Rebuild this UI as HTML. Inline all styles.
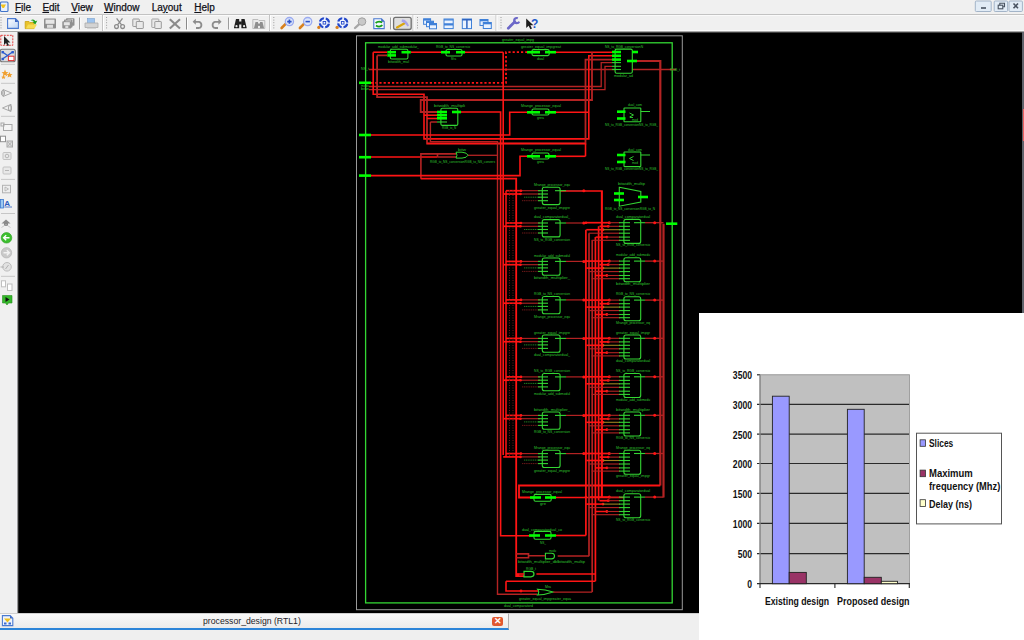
<!DOCTYPE html>
<html><head><meta charset="utf-8">
<style>
*{margin:0;padding:0;box-sizing:border-box}
html,body{width:1024px;height:640px;overflow:hidden;background:#f0f0f0;font-family:"Liberation Sans",sans-serif}
.abs{position:absolute}
#menubar{left:0;top:0;width:1024px;height:15px;background:#f0f0f0;border-bottom:1px solid #c2c2c2}
.menu{position:absolute;top:1.5px;font-size:10px;color:#101018;line-height:11px;-webkit-text-stroke:0.25px #101018}
.menu u{text-decoration:underline}
#toolbar{left:0;top:15px;width:1024px;height:17px;background:#f0f0f0;border-top:1px solid #fafafa;border-bottom:1px solid #a8a8a8;box-shadow:inset 0 -1px 0 #fbfbfb}
#canvas{left:18px;top:32px;width:1004px;height:581px;background:#000;border-top:1px solid #404040;border-left:1px solid #262626}
#lefttb{left:0;top:32px;width:18px;height:581px;background:#f0f0f0;border-right:1px solid #9a9a9a;box-shadow:inset -1px 0 0 #f2f2f6}
#rightedge{left:1022px;top:32px;width:2px;height:581px;background:#5f636b}
#bottom{left:0;top:613px;width:1024px;height:27px;background:#efefef;border-top:1px solid #cfcfcf}
#tab{left:0;top:613px;width:509px;height:17px;background:linear-gradient(#f9f9f9,#ebebeb);border-top:1px solid #d0d0d0;border-right:1px solid #b0b0b0;border-bottom:2px solid #2b84d8}
#chart{left:699px;top:313px;width:325px;height:327px;background:#fff}
.ylab{position:absolute;font-size:10px;font-weight:bold;color:#111;text-align:right;width:30px;transform:scaleX(.86);transform-origin:100% 0;line-height:10px}
.ctxt{position:absolute;font-size:10.5px;font-weight:bold;color:#111;white-space:nowrap;transform-origin:0 0;line-height:11px}
</style></head><body>
<div id="menubar" class="abs"></div>
<div id="toolbar" class="abs"></div>
<div id="canvas" class="abs"></div>
<div id="lefttb" class="abs"></div>
<div id="rightedge" class="abs"></div>
<div class="abs" style="left:1023px;top:109px;width:1px;height:32px;background:#f06060"></div>
<div id="bottom" class="abs"></div>
<div id="tab" class="abs"></div>
<div class="abs" style="left:202.8px;top:616.3px;font-size:9px;color:#1e1e2a;white-space:nowrap;line-height:11px;transform:scaleX(.965);transform-origin:0 0">processor_design (RTL1)</div>
<svg class="abs" style="left:0;top:0" width="40" height="640"><path d="M2.4,615.6 H10.2 L12.8,618.2 V625.6 H2.4 Z" fill="#eef4fc" stroke="#4a7ad0" stroke-width="1.1"/><path d="M10,615.6 L12.8,618.4 H10 Z" fill="#3b66c4"/><path d="M4,618.5 H11 L7.5,622.5 Z" fill="#f0c020"/><rect x="4" y="622.5" width="2.5" height="2" fill="#3a6ad0"/><rect x="8.5" y="622.5" width="2.5" height="2" fill="#3a6ad0"/></svg>
<div class="abs" style="left:492px;top:617px;width:11px;height:9px;background:#e2582f;border-radius:2px;color:#fff;font-size:9px;line-height:9px;text-align:center;font-weight:bold">&#x2715;</div>
<svg class="abs" style="left:0;top:0" width="1024" height="640" viewBox="0 0 1024 640">
<rect x="356.5" y="35.8" width="325.8" height="573.9" fill="none" stroke="#9a9a9a" stroke-width="1"/>
<rect x="365.6" y="42.8" width="306.6" height="560.1" fill="none" stroke="#33d633" stroke-width="1.3"/>
<text x="502" y="40.8" font-family="Liberation Sans" font-size="4" textLength="32" lengthAdjust="spacingAndGlyphs" fill="#2fc42f">greater_equal_impg</text>
<text x="504" y="606.5" font-family="Liberation Sans" font-size="4" textLength="29" lengthAdjust="spacingAndGlyphs" fill="#2fc42f">dual_comparatord</text>
<line x1="369" y1="69.5" x2="676" y2="69.5" stroke="#b42323" stroke-width="1.3" />
<path d="M369,86.5 H601.2 V62.6 H612" fill="none" stroke="#b42323" stroke-width="1.3" />
<path d="M369,89.7 H605 V66.3 H612" fill="none" stroke="#b42323" stroke-width="1.3" />
<text x="361" y="69.8" font-family="Liberation Sans" font-size="4" textLength="8" lengthAdjust="spacingAndGlyphs" fill="#2fc42f">NS_t</text>
<text x="361" y="86.8" font-family="Liberation Sans" font-size="4" textLength="8" lengthAdjust="spacingAndGlyphs" fill="#2fc42f">modu</text>
<text x="361" y="90.0" font-family="Liberation Sans" font-size="4" textLength="8" lengthAdjust="spacingAndGlyphs" fill="#2fc42f">bitw</text>
<text x="670" y="70.5" font-family="Liberation Sans" font-size="4" textLength="10" lengthAdjust="spacingAndGlyphs" fill="#2fc42f">RGB_t</text>
<path d="M371,82.8 H506 V52.2 H527" fill="none" stroke="#ff1414" stroke-width="1.8" stroke-dasharray="2.2 2"/>
<line x1="359" y1="82.8" x2="371" y2="82.8" stroke="#00ff00" stroke-width="2.6" />
<line x1="373.2" y1="52.2" x2="387" y2="52.2" stroke="#ff1414" stroke-width="1.6" />
<line x1="410.8" y1="52.2" x2="441" y2="52.2" stroke="#ff1414" stroke-width="1.6" />
<line x1="465" y1="52.2" x2="503.2" y2="52.2" stroke="#ff1414" stroke-width="1.6" />
<line x1="556" y1="52.2" x2="612" y2="52.2" stroke="#ff1414" stroke-width="1.6" />
<path d="M373.2,52.2 V94.2 H424 V138.9 H588.8 V55.8 H612" fill="none" stroke="#ff1414" stroke-width="1.6" />
<path d="M377.1,55.4 H387 M377.1,55.4 V97.1 H427 V143.5 H585.5 V59.6 H612" fill="none" stroke="#b42323" stroke-width="1.8" />
<path d="M427,143.5 H585.5" fill="none" stroke="#ff1414" stroke-width="1.6" />
<path d="M592,52.2 V100 H420.7 V112 H437" fill="none" stroke="#b42323" stroke-width="1.8" />
<line x1="424" y1="115.2" x2="437" y2="115.2" stroke="#ff1414" stroke-width="1.6" />
<line x1="427" y1="118.5" x2="437" y2="118.5" stroke="#ff1414" stroke-width="1.6" />
<path d="M461,112 H500.6 V535.8 H534" fill="none" stroke="#ff1414" stroke-width="1.6" />
<path d="M430.4,122 H437 M430.4,122 V141.6 H497.5 V594.3 H537" fill="none" stroke="#b42323" stroke-width="1.4" />
<path d="M370,135 H509.7 V112.3 H527" fill="none" stroke="#ff1414" stroke-width="1.6" />
<line x1="359" y1="135" x2="371" y2="135" stroke="#00ff00" stroke-width="2.6" />
<line x1="556" y1="112.3" x2="588.8" y2="112.3" stroke="#ff1414" stroke-width="1.6" />
<line x1="503.2" y1="52.2" x2="503.2" y2="455" stroke="#ff1414" stroke-width="1.6" />
<line x1="359" y1="157.2" x2="371" y2="157.2" stroke="#00ff00" stroke-width="2.6" />
<line x1="359" y1="175.6" x2="371" y2="175.6" stroke="#00ff00" stroke-width="2.6" />
<line x1="371" y1="157" x2="437.5" y2="157" stroke="#ff1414" stroke-width="1.6" />
<line x1="437.5" y1="157" x2="456" y2="157" stroke="#b42323" stroke-width="1.5" />
<path d="M456,153.9 H420.9 V178.7 M437.5,153.9 V157" fill="none" stroke="#b42323" stroke-width="1.6" />
<path d="M420.7,178.7 H516.2 V576.2 H524" fill="none" stroke="#ff1414" stroke-width="1.8" />
<path d="M371,175.6 H520 V156.3 H527" fill="none" stroke="#ff1414" stroke-width="1.6" />
<line x1="556" y1="156.3" x2="585.5" y2="156.3" stroke="#ff1414" stroke-width="1.6" />
<path d="M585.5,143.5 V156.3" fill="none" stroke="#ff1414" stroke-width="1.6" />
<line x1="468" y1="155.3" x2="497.5" y2="155.3" stroke="#b42323" stroke-width="1.3" />
<path d="M560,191 H602 V497.5" fill="none" stroke="#ff1414" stroke-width="1.6" />
<path d="M637,61 H660.3 V485.5" fill="none" stroke="#b42323" stroke-width="2.2" />
<path d="M660.3,485.5 H519 V497.5 H534.5" fill="none" stroke="#ff1414" stroke-width="1.8" />
<line x1="551.2" y1="497.5" x2="624" y2="497.5" stroke="#ff1414" stroke-width="1.6" />
<line x1="663.5" y1="223.7" x2="663.5" y2="497.5" stroke="#b42323" stroke-width="2.2" />
<line x1="666" y1="223.7" x2="677.3" y2="223.7" stroke="#00ff00" stroke-width="2.6" />
<rect x="542.3" y="187.3" width="17.800000000000068" height="17.30000000000001" rx="2" fill="#000" stroke="#33d633" stroke-width="1.1"/>
<text x="534" y="185.8" font-family="Liberation Sans" font-size="4" textLength="36" lengthAdjust="spacingAndGlyphs" fill="#2fc42f">Mrange_processor_equ</text>
<text x="534" y="208.60000000000002" font-family="Liberation Sans" font-size="4" textLength="36" lengthAdjust="spacingAndGlyphs" fill="#2fc42f">greater_equal_impgre</text>
<line x1="506" y1="190.70000000000002" x2="521" y2="190.70000000000002" stroke="#ff1414" stroke-width="1.7" />
<line x1="521" y1="190.70000000000002" x2="540" y2="190.70000000000002" stroke="#b42323" stroke-width="1.1" />
<circle cx="521" cy="190.70000000000002" r="1.3" fill="#ff1414"/>
<line x1="503.2" y1="194.0" x2="520.5" y2="194.0" stroke="#ff1414" stroke-width="1.7" />
<line x1="520.5" y1="194.0" x2="540" y2="194.0" stroke="#b42323" stroke-width="1.1" />
<circle cx="520.5" cy="194.0" r="1.3" fill="#ff1414"/>
<line x1="524" y1="197.20000000000002" x2="540" y2="197.20000000000002" stroke="#2a9a2a" stroke-width="0.8" stroke-dasharray="1.2 0.6"/>
<line x1="522" y1="200.70000000000002" x2="540" y2="200.70000000000002" stroke="#8a2020" stroke-width="0.8" stroke-dasharray="1.2 0.6"/>
<line x1="538" y1="190.70000000000002" x2="548" y2="190.70000000000002" stroke="#33d633" stroke-width="1.1" />
<line x1="538" y1="194.0" x2="548" y2="194.0" stroke="#33d633" stroke-width="1.1" />
<line x1="538" y1="197.20000000000002" x2="548" y2="197.20000000000002" stroke="#33d633" stroke-width="1.1" />
<line x1="538" y1="200.70000000000002" x2="548" y2="200.70000000000002" stroke="#33d633" stroke-width="1.1" />
<line x1="555" y1="190.70000000000002" x2="566" y2="190.70000000000002" stroke="#33d633" stroke-width="1.1" />
<line x1="566" y1="190.70000000000002" x2="585.9" y2="190.70000000000002" stroke="#b42323" stroke-width="1.2" />
<circle cx="583.8" cy="190.70000000000002" r="1.5" fill="#ff1414"/>
<rect x="542.3" y="219.6" width="17.800000000000068" height="17.30000000000001" rx="2" fill="#000" stroke="#33d633" stroke-width="1.1"/>
<text x="534" y="218.1" font-family="Liberation Sans" font-size="4" textLength="36" lengthAdjust="spacingAndGlyphs" fill="#2fc42f">dual_comparatordual_</text>
<text x="534" y="240.9" font-family="Liberation Sans" font-size="4" textLength="36" lengthAdjust="spacingAndGlyphs" fill="#2fc42f">NS_to_RGB_conversion</text>
<line x1="506" y1="223.0" x2="521" y2="223.0" stroke="#ff1414" stroke-width="1.7" />
<line x1="521" y1="223.0" x2="540" y2="223.0" stroke="#b42323" stroke-width="1.1" />
<circle cx="521" cy="223.0" r="1.3" fill="#ff1414"/>
<line x1="503.2" y1="226.29999999999998" x2="520.5" y2="226.29999999999998" stroke="#ff1414" stroke-width="1.7" />
<line x1="520.5" y1="226.29999999999998" x2="540" y2="226.29999999999998" stroke="#b42323" stroke-width="1.1" />
<circle cx="520.5" cy="226.29999999999998" r="1.3" fill="#ff1414"/>
<line x1="524" y1="229.5" x2="540" y2="229.5" stroke="#2a9a2a" stroke-width="0.8" stroke-dasharray="1.2 0.6"/>
<line x1="522" y1="233.0" x2="540" y2="233.0" stroke="#8a2020" stroke-width="0.8" stroke-dasharray="1.2 0.6"/>
<line x1="538" y1="223.0" x2="548" y2="223.0" stroke="#33d633" stroke-width="1.1" />
<line x1="538" y1="226.29999999999998" x2="548" y2="226.29999999999998" stroke="#33d633" stroke-width="1.1" />
<line x1="538" y1="229.5" x2="548" y2="229.5" stroke="#33d633" stroke-width="1.1" />
<line x1="538" y1="233.0" x2="548" y2="233.0" stroke="#33d633" stroke-width="1.1" />
<line x1="555" y1="223.0" x2="566" y2="223.0" stroke="#33d633" stroke-width="1.1" />
<line x1="566" y1="223.0" x2="585.9" y2="223.0" stroke="#b42323" stroke-width="1.2" />
<circle cx="583.8" cy="223.0" r="1.5" fill="#ff1414"/>
<rect x="542.3" y="258.0" width="17.800000000000068" height="17.30000000000001" rx="2" fill="#000" stroke="#33d633" stroke-width="1.1"/>
<text x="534" y="256.5" font-family="Liberation Sans" font-size="4" textLength="36" lengthAdjust="spacingAndGlyphs" fill="#2fc42f">modular_add_submodul</text>
<text x="534" y="279.3" font-family="Liberation Sans" font-size="4" textLength="36" lengthAdjust="spacingAndGlyphs" fill="#2fc42f">bitwidth_multiplier_</text>
<line x1="506" y1="261.4" x2="521" y2="261.4" stroke="#ff1414" stroke-width="1.7" />
<line x1="521" y1="261.4" x2="540" y2="261.4" stroke="#b42323" stroke-width="1.1" />
<circle cx="521" cy="261.4" r="1.3" fill="#ff1414"/>
<line x1="503.2" y1="264.7" x2="520.5" y2="264.7" stroke="#ff1414" stroke-width="1.7" />
<line x1="520.5" y1="264.7" x2="540" y2="264.7" stroke="#b42323" stroke-width="1.1" />
<circle cx="520.5" cy="264.7" r="1.3" fill="#ff1414"/>
<line x1="524" y1="267.9" x2="540" y2="267.9" stroke="#2a9a2a" stroke-width="0.8" stroke-dasharray="1.2 0.6"/>
<line x1="522" y1="271.4" x2="540" y2="271.4" stroke="#8a2020" stroke-width="0.8" stroke-dasharray="1.2 0.6"/>
<line x1="538" y1="261.4" x2="548" y2="261.4" stroke="#33d633" stroke-width="1.1" />
<line x1="538" y1="264.7" x2="548" y2="264.7" stroke="#33d633" stroke-width="1.1" />
<line x1="538" y1="267.9" x2="548" y2="267.9" stroke="#33d633" stroke-width="1.1" />
<line x1="538" y1="271.4" x2="548" y2="271.4" stroke="#33d633" stroke-width="1.1" />
<line x1="555" y1="261.4" x2="566" y2="261.4" stroke="#33d633" stroke-width="1.1" />
<line x1="566" y1="261.4" x2="585.9" y2="261.4" stroke="#b42323" stroke-width="1.2" />
<circle cx="583.8" cy="261.4" r="1.5" fill="#ff1414"/>
<rect x="542.3" y="296.5" width="17.800000000000068" height="17.30000000000001" rx="2" fill="#000" stroke="#33d633" stroke-width="1.1"/>
<text x="534" y="295.0" font-family="Liberation Sans" font-size="4" textLength="36" lengthAdjust="spacingAndGlyphs" fill="#2fc42f">RGB_to_NS_conversion</text>
<text x="534" y="317.8" font-family="Liberation Sans" font-size="4" textLength="36" lengthAdjust="spacingAndGlyphs" fill="#2fc42f">Mrange_processor_equ</text>
<line x1="506" y1="299.9" x2="521" y2="299.9" stroke="#ff1414" stroke-width="1.7" />
<line x1="521" y1="299.9" x2="540" y2="299.9" stroke="#b42323" stroke-width="1.1" />
<circle cx="521" cy="299.9" r="1.3" fill="#ff1414"/>
<line x1="503.2" y1="303.2" x2="520.5" y2="303.2" stroke="#ff1414" stroke-width="1.7" />
<line x1="520.5" y1="303.2" x2="540" y2="303.2" stroke="#b42323" stroke-width="1.1" />
<circle cx="520.5" cy="303.2" r="1.3" fill="#ff1414"/>
<line x1="524" y1="306.4" x2="540" y2="306.4" stroke="#2a9a2a" stroke-width="0.8" stroke-dasharray="1.2 0.6"/>
<line x1="522" y1="309.9" x2="540" y2="309.9" stroke="#8a2020" stroke-width="0.8" stroke-dasharray="1.2 0.6"/>
<line x1="538" y1="299.9" x2="548" y2="299.9" stroke="#33d633" stroke-width="1.1" />
<line x1="538" y1="303.2" x2="548" y2="303.2" stroke="#33d633" stroke-width="1.1" />
<line x1="538" y1="306.4" x2="548" y2="306.4" stroke="#33d633" stroke-width="1.1" />
<line x1="538" y1="309.9" x2="548" y2="309.9" stroke="#33d633" stroke-width="1.1" />
<line x1="555" y1="299.9" x2="566" y2="299.9" stroke="#33d633" stroke-width="1.1" />
<line x1="566" y1="299.9" x2="585.9" y2="299.9" stroke="#b42323" stroke-width="1.2" />
<circle cx="583.8" cy="299.9" r="1.5" fill="#ff1414"/>
<rect x="542.3" y="335.0" width="17.800000000000068" height="17.30000000000001" rx="2" fill="#000" stroke="#33d633" stroke-width="1.1"/>
<text x="534" y="333.5" font-family="Liberation Sans" font-size="4" textLength="36" lengthAdjust="spacingAndGlyphs" fill="#2fc42f">greater_equal_impgre</text>
<text x="534" y="356.3" font-family="Liberation Sans" font-size="4" textLength="36" lengthAdjust="spacingAndGlyphs" fill="#2fc42f">dual_comparatordual_</text>
<line x1="506" y1="338.4" x2="521" y2="338.4" stroke="#ff1414" stroke-width="1.7" />
<line x1="521" y1="338.4" x2="540" y2="338.4" stroke="#b42323" stroke-width="1.1" />
<circle cx="521" cy="338.4" r="1.3" fill="#ff1414"/>
<line x1="503.2" y1="341.7" x2="520.5" y2="341.7" stroke="#ff1414" stroke-width="1.7" />
<line x1="520.5" y1="341.7" x2="540" y2="341.7" stroke="#b42323" stroke-width="1.1" />
<circle cx="520.5" cy="341.7" r="1.3" fill="#ff1414"/>
<line x1="524" y1="344.9" x2="540" y2="344.9" stroke="#2a9a2a" stroke-width="0.8" stroke-dasharray="1.2 0.6"/>
<line x1="522" y1="348.4" x2="540" y2="348.4" stroke="#8a2020" stroke-width="0.8" stroke-dasharray="1.2 0.6"/>
<line x1="538" y1="338.4" x2="548" y2="338.4" stroke="#33d633" stroke-width="1.1" />
<line x1="538" y1="341.7" x2="548" y2="341.7" stroke="#33d633" stroke-width="1.1" />
<line x1="538" y1="344.9" x2="548" y2="344.9" stroke="#33d633" stroke-width="1.1" />
<line x1="538" y1="348.4" x2="548" y2="348.4" stroke="#33d633" stroke-width="1.1" />
<line x1="555" y1="338.4" x2="566" y2="338.4" stroke="#33d633" stroke-width="1.1" />
<line x1="566" y1="338.4" x2="585.9" y2="338.4" stroke="#b42323" stroke-width="1.2" />
<circle cx="583.8" cy="338.4" r="1.5" fill="#ff1414"/>
<rect x="542.3" y="373.5" width="17.800000000000068" height="17.30000000000001" rx="2" fill="#000" stroke="#33d633" stroke-width="1.1"/>
<text x="534" y="372.0" font-family="Liberation Sans" font-size="4" textLength="36" lengthAdjust="spacingAndGlyphs" fill="#2fc42f">NS_to_RGB_conversion</text>
<text x="534" y="394.8" font-family="Liberation Sans" font-size="4" textLength="36" lengthAdjust="spacingAndGlyphs" fill="#2fc42f">modular_add_submodul</text>
<line x1="506" y1="376.9" x2="521" y2="376.9" stroke="#ff1414" stroke-width="1.7" />
<line x1="521" y1="376.9" x2="540" y2="376.9" stroke="#b42323" stroke-width="1.1" />
<circle cx="521" cy="376.9" r="1.3" fill="#ff1414"/>
<line x1="503.2" y1="380.2" x2="520.5" y2="380.2" stroke="#ff1414" stroke-width="1.7" />
<line x1="520.5" y1="380.2" x2="540" y2="380.2" stroke="#b42323" stroke-width="1.1" />
<circle cx="520.5" cy="380.2" r="1.3" fill="#ff1414"/>
<line x1="524" y1="383.4" x2="540" y2="383.4" stroke="#2a9a2a" stroke-width="0.8" stroke-dasharray="1.2 0.6"/>
<line x1="522" y1="386.9" x2="540" y2="386.9" stroke="#8a2020" stroke-width="0.8" stroke-dasharray="1.2 0.6"/>
<line x1="538" y1="376.9" x2="548" y2="376.9" stroke="#33d633" stroke-width="1.1" />
<line x1="538" y1="380.2" x2="548" y2="380.2" stroke="#33d633" stroke-width="1.1" />
<line x1="538" y1="383.4" x2="548" y2="383.4" stroke="#33d633" stroke-width="1.1" />
<line x1="538" y1="386.9" x2="548" y2="386.9" stroke="#33d633" stroke-width="1.1" />
<line x1="555" y1="376.9" x2="566" y2="376.9" stroke="#33d633" stroke-width="1.1" />
<line x1="566" y1="376.9" x2="585.9" y2="376.9" stroke="#b42323" stroke-width="1.2" />
<circle cx="583.8" cy="376.9" r="1.5" fill="#ff1414"/>
<rect x="542.3" y="412.0" width="17.800000000000068" height="17.30000000000001" rx="2" fill="#000" stroke="#33d633" stroke-width="1.1"/>
<text x="534" y="410.5" font-family="Liberation Sans" font-size="4" textLength="36" lengthAdjust="spacingAndGlyphs" fill="#2fc42f">bitwidth_multiplier_</text>
<text x="534" y="433.3" font-family="Liberation Sans" font-size="4" textLength="36" lengthAdjust="spacingAndGlyphs" fill="#2fc42f">RGB_to_NS_conversion</text>
<line x1="506" y1="415.4" x2="521" y2="415.4" stroke="#ff1414" stroke-width="1.7" />
<line x1="521" y1="415.4" x2="540" y2="415.4" stroke="#b42323" stroke-width="1.1" />
<circle cx="521" cy="415.4" r="1.3" fill="#ff1414"/>
<line x1="503.2" y1="418.7" x2="520.5" y2="418.7" stroke="#ff1414" stroke-width="1.7" />
<line x1="520.5" y1="418.7" x2="540" y2="418.7" stroke="#b42323" stroke-width="1.1" />
<circle cx="520.5" cy="418.7" r="1.3" fill="#ff1414"/>
<line x1="524" y1="421.9" x2="540" y2="421.9" stroke="#2a9a2a" stroke-width="0.8" stroke-dasharray="1.2 0.6"/>
<line x1="522" y1="425.4" x2="540" y2="425.4" stroke="#8a2020" stroke-width="0.8" stroke-dasharray="1.2 0.6"/>
<line x1="538" y1="415.4" x2="548" y2="415.4" stroke="#33d633" stroke-width="1.1" />
<line x1="538" y1="418.7" x2="548" y2="418.7" stroke="#33d633" stroke-width="1.1" />
<line x1="538" y1="421.9" x2="548" y2="421.9" stroke="#33d633" stroke-width="1.1" />
<line x1="538" y1="425.4" x2="548" y2="425.4" stroke="#33d633" stroke-width="1.1" />
<line x1="555" y1="415.4" x2="566" y2="415.4" stroke="#33d633" stroke-width="1.1" />
<line x1="566" y1="415.4" x2="585.9" y2="415.4" stroke="#b42323" stroke-width="1.2" />
<circle cx="583.8" cy="415.4" r="1.5" fill="#ff1414"/>
<rect x="542.3" y="450.2" width="17.800000000000068" height="17.30000000000001" rx="2" fill="#000" stroke="#33d633" stroke-width="1.1"/>
<text x="534" y="448.7" font-family="Liberation Sans" font-size="4" textLength="36" lengthAdjust="spacingAndGlyphs" fill="#2fc42f">Mrange_processor_equ</text>
<text x="534" y="471.5" font-family="Liberation Sans" font-size="4" textLength="36" lengthAdjust="spacingAndGlyphs" fill="#2fc42f">greater_equal_impgre</text>
<line x1="506" y1="453.59999999999997" x2="521" y2="453.59999999999997" stroke="#ff1414" stroke-width="1.7" />
<line x1="521" y1="453.59999999999997" x2="540" y2="453.59999999999997" stroke="#b42323" stroke-width="1.1" />
<circle cx="521" cy="453.59999999999997" r="1.3" fill="#ff1414"/>
<line x1="503.2" y1="456.9" x2="520.5" y2="456.9" stroke="#ff1414" stroke-width="1.7" />
<line x1="520.5" y1="456.9" x2="540" y2="456.9" stroke="#b42323" stroke-width="1.1" />
<circle cx="520.5" cy="456.9" r="1.3" fill="#ff1414"/>
<line x1="524" y1="460.09999999999997" x2="540" y2="460.09999999999997" stroke="#2a9a2a" stroke-width="0.8" stroke-dasharray="1.2 0.6"/>
<line x1="522" y1="463.59999999999997" x2="540" y2="463.59999999999997" stroke="#8a2020" stroke-width="0.8" stroke-dasharray="1.2 0.6"/>
<line x1="538" y1="453.59999999999997" x2="548" y2="453.59999999999997" stroke="#33d633" stroke-width="1.1" />
<line x1="538" y1="456.9" x2="548" y2="456.9" stroke="#33d633" stroke-width="1.1" />
<line x1="538" y1="460.09999999999997" x2="548" y2="460.09999999999997" stroke="#33d633" stroke-width="1.1" />
<line x1="538" y1="463.59999999999997" x2="548" y2="463.59999999999997" stroke="#33d633" stroke-width="1.1" />
<line x1="555" y1="453.59999999999997" x2="566" y2="453.59999999999997" stroke="#33d633" stroke-width="1.1" />
<line x1="566" y1="453.59999999999997" x2="585.9" y2="453.59999999999997" stroke="#b42323" stroke-width="1.2" />
<circle cx="583.8" cy="453.59999999999997" r="1.5" fill="#ff1414"/>
<line x1="509.5" y1="190" x2="509.5" y2="457" stroke="#7a1a1a" stroke-width="0.9" stroke-dasharray="1 1.5"/>
<line x1="513" y1="190" x2="513" y2="457" stroke="#7a1a1a" stroke-width="0.9" stroke-dasharray="1 1.5"/>
<line x1="506" y1="190.8" x2="506" y2="457" stroke="#ff1414" stroke-width="1.5" />
<line x1="585.9" y1="229.70000000000002" x2="585.9" y2="535.5" stroke="#ff1414" stroke-width="1.7" />
<line x1="589" y1="233.20000000000002" x2="589" y2="556.3" stroke="#b42323" stroke-width="1.7" />
<line x1="592.2" y1="240.3" x2="592.2" y2="592" stroke="#b42323" stroke-width="1.7" />
<line x1="595.4" y1="237.1" x2="595.4" y2="581.3" stroke="#ff1414" stroke-width="1.7" />
<line x1="598.6" y1="226.3" x2="598.6" y2="500.5" stroke="#ff1414" stroke-width="1.7" />
<line x1="601.7" y1="191" x2="601.7" y2="497.5" stroke="#ff1414" stroke-width="1.7" />
<rect x="623.9" y="219.4" width="16.800000000000068" height="24.0" rx="2" fill="#000" stroke="#33d633" stroke-width="1.1"/>
<text x="616" y="217.9" font-family="Liberation Sans" font-size="4" textLength="34" lengthAdjust="spacingAndGlyphs" fill="#2fc42f">dual_comparatordual</text>
<text x="616" y="246.4" font-family="Liberation Sans" font-size="4" textLength="34" lengthAdjust="spacingAndGlyphs" fill="#2fc42f">NS_to_RGB_conversio</text>
<line x1="585.9" y1="222.70000000000002" x2="609.3" y2="222.70000000000002" stroke="#ff1414" stroke-width="1.7" />
<circle cx="609.3" cy="222.70000000000002" r="1.5" fill="#ff1414"/>
<circle cx="585.9" cy="222.70000000000002" r="1.3" fill="#ff1414"/>
<line x1="609.3" y1="222.70000000000002" x2="620" y2="222.70000000000002" stroke="#b42323" stroke-width="1.1" />
<line x1="599.5" y1="226.3" x2="608.3" y2="226.3" stroke="#ff1414" stroke-width="1.7" />
<circle cx="608.3" cy="226.3" r="1.4" fill="#ff1414"/>
<line x1="608.3" y1="226.3" x2="620" y2="226.3" stroke="#b42323" stroke-width="1.1" />
<line x1="586.3" y1="229.70000000000002" x2="603" y2="229.70000000000002" stroke="#ff1414" stroke-width="1.6" />
<circle cx="603" cy="229.70000000000002" r="1.4" fill="#ff1414"/>
<line x1="603" y1="229.70000000000002" x2="620" y2="229.70000000000002" stroke="#a08020" stroke-width="1.1" />
<line x1="588.8" y1="233.20000000000002" x2="620" y2="233.20000000000002" stroke="#b42323" stroke-width="1.1" />
<line x1="595.6" y1="237.1" x2="606.9" y2="237.1" stroke="#ff1414" stroke-width="1.5" />
<circle cx="606.9" cy="237.1" r="1.4" fill="#ff1414"/>
<line x1="606.9" y1="237.1" x2="620" y2="237.1" stroke="#b42323" stroke-width="1.1" />
<line x1="591.7" y1="240.3" x2="620" y2="240.3" stroke="#b42323" stroke-width="1.1" />
<line x1="619" y1="222.70000000000002" x2="630" y2="222.70000000000002" stroke="#33d633" stroke-width="1.1" />
<line x1="619" y1="226.3" x2="630" y2="226.3" stroke="#33d633" stroke-width="1.1" />
<line x1="619" y1="229.70000000000002" x2="630" y2="229.70000000000002" stroke="#33d633" stroke-width="1.1" />
<line x1="619" y1="233.20000000000002" x2="630" y2="233.20000000000002" stroke="#33d633" stroke-width="1.1" />
<line x1="619" y1="237.1" x2="630" y2="237.1" stroke="#33d633" stroke-width="1.1" />
<line x1="619" y1="240.3" x2="630" y2="240.3" stroke="#33d633" stroke-width="1.1" />
<line x1="634" y1="222.70000000000002" x2="645" y2="222.70000000000002" stroke="#33d633" stroke-width="1.1" />
<line x1="645" y1="222.70000000000002" x2="663.5" y2="222.70000000000002" stroke="#b42323" stroke-width="1.3" />
<circle cx="654.7" cy="222.70000000000002" r="1.5" fill="#ff1414"/>
<rect x="623.9" y="257.8" width="16.800000000000068" height="24.0" rx="2" fill="#000" stroke="#33d633" stroke-width="1.1"/>
<text x="616" y="256.3" font-family="Liberation Sans" font-size="4" textLength="34" lengthAdjust="spacingAndGlyphs" fill="#2fc42f">modular_add_submodu</text>
<text x="616" y="284.8" font-family="Liberation Sans" font-size="4" textLength="34" lengthAdjust="spacingAndGlyphs" fill="#2fc42f">bitwidth_multiplier</text>
<line x1="585.9" y1="261.1" x2="609.3" y2="261.1" stroke="#ff1414" stroke-width="1.7" />
<circle cx="609.3" cy="261.1" r="1.5" fill="#ff1414"/>
<circle cx="585.9" cy="261.1" r="1.3" fill="#ff1414"/>
<line x1="609.3" y1="261.1" x2="620" y2="261.1" stroke="#b42323" stroke-width="1.1" />
<line x1="599.5" y1="264.7" x2="608.3" y2="264.7" stroke="#ff1414" stroke-width="1.7" />
<circle cx="608.3" cy="264.7" r="1.4" fill="#ff1414"/>
<line x1="608.3" y1="264.7" x2="620" y2="264.7" stroke="#b42323" stroke-width="1.1" />
<line x1="586.3" y1="268.1" x2="603" y2="268.1" stroke="#ff1414" stroke-width="1.6" />
<circle cx="603" cy="268.1" r="1.4" fill="#ff1414"/>
<line x1="603" y1="268.1" x2="620" y2="268.1" stroke="#a08020" stroke-width="1.1" />
<line x1="588.8" y1="271.6" x2="620" y2="271.6" stroke="#b42323" stroke-width="1.1" />
<line x1="595.6" y1="275.5" x2="606.9" y2="275.5" stroke="#ff1414" stroke-width="1.5" />
<circle cx="606.9" cy="275.5" r="1.4" fill="#ff1414"/>
<line x1="606.9" y1="275.5" x2="620" y2="275.5" stroke="#b42323" stroke-width="1.1" />
<line x1="591.7" y1="278.7" x2="620" y2="278.7" stroke="#b42323" stroke-width="1.1" />
<line x1="619" y1="261.1" x2="630" y2="261.1" stroke="#33d633" stroke-width="1.1" />
<line x1="619" y1="264.7" x2="630" y2="264.7" stroke="#33d633" stroke-width="1.1" />
<line x1="619" y1="268.1" x2="630" y2="268.1" stroke="#33d633" stroke-width="1.1" />
<line x1="619" y1="271.6" x2="630" y2="271.6" stroke="#33d633" stroke-width="1.1" />
<line x1="619" y1="275.5" x2="630" y2="275.5" stroke="#33d633" stroke-width="1.1" />
<line x1="619" y1="278.7" x2="630" y2="278.7" stroke="#33d633" stroke-width="1.1" />
<line x1="634" y1="261.1" x2="645" y2="261.1" stroke="#33d633" stroke-width="1.1" />
<line x1="645" y1="261.1" x2="663.5" y2="261.1" stroke="#b42323" stroke-width="1.3" />
<circle cx="654.7" cy="261.1" r="1.5" fill="#ff1414"/>
<rect x="623.9" y="296.8" width="16.800000000000068" height="24.0" rx="2" fill="#000" stroke="#33d633" stroke-width="1.1"/>
<text x="616" y="295.3" font-family="Liberation Sans" font-size="4" textLength="34" lengthAdjust="spacingAndGlyphs" fill="#2fc42f">RGB_to_NS_conversio</text>
<text x="616" y="323.8" font-family="Liberation Sans" font-size="4" textLength="34" lengthAdjust="spacingAndGlyphs" fill="#2fc42f">Mrange_processor_eq</text>
<line x1="585.9" y1="300.1" x2="609.3" y2="300.1" stroke="#ff1414" stroke-width="1.7" />
<circle cx="609.3" cy="300.1" r="1.5" fill="#ff1414"/>
<circle cx="585.9" cy="300.1" r="1.3" fill="#ff1414"/>
<line x1="609.3" y1="300.1" x2="620" y2="300.1" stroke="#b42323" stroke-width="1.1" />
<line x1="599.5" y1="303.7" x2="608.3" y2="303.7" stroke="#ff1414" stroke-width="1.7" />
<circle cx="608.3" cy="303.7" r="1.4" fill="#ff1414"/>
<line x1="608.3" y1="303.7" x2="620" y2="303.7" stroke="#b42323" stroke-width="1.1" />
<line x1="586.3" y1="307.1" x2="603" y2="307.1" stroke="#ff1414" stroke-width="1.6" />
<circle cx="603" cy="307.1" r="1.4" fill="#ff1414"/>
<line x1="603" y1="307.1" x2="620" y2="307.1" stroke="#a08020" stroke-width="1.1" />
<line x1="588.8" y1="310.6" x2="620" y2="310.6" stroke="#b42323" stroke-width="1.1" />
<line x1="595.6" y1="314.5" x2="606.9" y2="314.5" stroke="#ff1414" stroke-width="1.5" />
<circle cx="606.9" cy="314.5" r="1.4" fill="#ff1414"/>
<line x1="606.9" y1="314.5" x2="620" y2="314.5" stroke="#b42323" stroke-width="1.1" />
<line x1="591.7" y1="317.7" x2="620" y2="317.7" stroke="#b42323" stroke-width="1.1" />
<line x1="619" y1="300.1" x2="630" y2="300.1" stroke="#33d633" stroke-width="1.1" />
<line x1="619" y1="303.7" x2="630" y2="303.7" stroke="#33d633" stroke-width="1.1" />
<line x1="619" y1="307.1" x2="630" y2="307.1" stroke="#33d633" stroke-width="1.1" />
<line x1="619" y1="310.6" x2="630" y2="310.6" stroke="#33d633" stroke-width="1.1" />
<line x1="619" y1="314.5" x2="630" y2="314.5" stroke="#33d633" stroke-width="1.1" />
<line x1="619" y1="317.7" x2="630" y2="317.7" stroke="#33d633" stroke-width="1.1" />
<line x1="634" y1="300.1" x2="645" y2="300.1" stroke="#33d633" stroke-width="1.1" />
<line x1="645" y1="300.1" x2="663.5" y2="300.1" stroke="#b42323" stroke-width="1.3" />
<circle cx="654.7" cy="300.1" r="1.5" fill="#ff1414"/>
<rect x="623.9" y="335.0" width="16.800000000000068" height="24.0" rx="2" fill="#000" stroke="#33d633" stroke-width="1.1"/>
<text x="616" y="333.5" font-family="Liberation Sans" font-size="4" textLength="34" lengthAdjust="spacingAndGlyphs" fill="#2fc42f">greater_equal_impgr</text>
<text x="616" y="362.0" font-family="Liberation Sans" font-size="4" textLength="34" lengthAdjust="spacingAndGlyphs" fill="#2fc42f">dual_comparatordual</text>
<line x1="585.9" y1="338.3" x2="609.3" y2="338.3" stroke="#ff1414" stroke-width="1.7" />
<circle cx="609.3" cy="338.3" r="1.5" fill="#ff1414"/>
<circle cx="585.9" cy="338.3" r="1.3" fill="#ff1414"/>
<line x1="609.3" y1="338.3" x2="620" y2="338.3" stroke="#b42323" stroke-width="1.1" />
<line x1="599.5" y1="341.9" x2="608.3" y2="341.9" stroke="#ff1414" stroke-width="1.7" />
<circle cx="608.3" cy="341.9" r="1.4" fill="#ff1414"/>
<line x1="608.3" y1="341.9" x2="620" y2="341.9" stroke="#b42323" stroke-width="1.1" />
<line x1="586.3" y1="345.3" x2="603" y2="345.3" stroke="#ff1414" stroke-width="1.6" />
<circle cx="603" cy="345.3" r="1.4" fill="#ff1414"/>
<line x1="603" y1="345.3" x2="620" y2="345.3" stroke="#a08020" stroke-width="1.1" />
<line x1="588.8" y1="348.8" x2="620" y2="348.8" stroke="#b42323" stroke-width="1.1" />
<line x1="595.6" y1="352.7" x2="606.9" y2="352.7" stroke="#ff1414" stroke-width="1.5" />
<circle cx="606.9" cy="352.7" r="1.4" fill="#ff1414"/>
<line x1="606.9" y1="352.7" x2="620" y2="352.7" stroke="#b42323" stroke-width="1.1" />
<line x1="591.7" y1="355.9" x2="620" y2="355.9" stroke="#b42323" stroke-width="1.1" />
<line x1="619" y1="338.3" x2="630" y2="338.3" stroke="#33d633" stroke-width="1.1" />
<line x1="619" y1="341.9" x2="630" y2="341.9" stroke="#33d633" stroke-width="1.1" />
<line x1="619" y1="345.3" x2="630" y2="345.3" stroke="#33d633" stroke-width="1.1" />
<line x1="619" y1="348.8" x2="630" y2="348.8" stroke="#33d633" stroke-width="1.1" />
<line x1="619" y1="352.7" x2="630" y2="352.7" stroke="#33d633" stroke-width="1.1" />
<line x1="619" y1="355.9" x2="630" y2="355.9" stroke="#33d633" stroke-width="1.1" />
<line x1="634" y1="338.3" x2="645" y2="338.3" stroke="#33d633" stroke-width="1.1" />
<line x1="645" y1="338.3" x2="663.5" y2="338.3" stroke="#b42323" stroke-width="1.3" />
<circle cx="654.7" cy="338.3" r="1.5" fill="#ff1414"/>
<rect x="623.9" y="373.5" width="16.800000000000068" height="24.0" rx="2" fill="#000" stroke="#33d633" stroke-width="1.1"/>
<text x="616" y="372.0" font-family="Liberation Sans" font-size="4" textLength="34" lengthAdjust="spacingAndGlyphs" fill="#2fc42f">NS_to_RGB_conversio</text>
<text x="616" y="400.5" font-family="Liberation Sans" font-size="4" textLength="34" lengthAdjust="spacingAndGlyphs" fill="#2fc42f">modular_add_submodu</text>
<line x1="585.9" y1="376.8" x2="609.3" y2="376.8" stroke="#ff1414" stroke-width="1.7" />
<circle cx="609.3" cy="376.8" r="1.5" fill="#ff1414"/>
<circle cx="585.9" cy="376.8" r="1.3" fill="#ff1414"/>
<line x1="609.3" y1="376.8" x2="620" y2="376.8" stroke="#b42323" stroke-width="1.1" />
<line x1="599.5" y1="380.4" x2="608.3" y2="380.4" stroke="#ff1414" stroke-width="1.7" />
<circle cx="608.3" cy="380.4" r="1.4" fill="#ff1414"/>
<line x1="608.3" y1="380.4" x2="620" y2="380.4" stroke="#b42323" stroke-width="1.1" />
<line x1="586.3" y1="383.8" x2="603" y2="383.8" stroke="#ff1414" stroke-width="1.6" />
<circle cx="603" cy="383.8" r="1.4" fill="#ff1414"/>
<line x1="603" y1="383.8" x2="620" y2="383.8" stroke="#a08020" stroke-width="1.1" />
<line x1="588.8" y1="387.3" x2="620" y2="387.3" stroke="#b42323" stroke-width="1.1" />
<line x1="595.6" y1="391.2" x2="606.9" y2="391.2" stroke="#ff1414" stroke-width="1.5" />
<circle cx="606.9" cy="391.2" r="1.4" fill="#ff1414"/>
<line x1="606.9" y1="391.2" x2="620" y2="391.2" stroke="#b42323" stroke-width="1.1" />
<line x1="591.7" y1="394.4" x2="620" y2="394.4" stroke="#b42323" stroke-width="1.1" />
<line x1="619" y1="376.8" x2="630" y2="376.8" stroke="#33d633" stroke-width="1.1" />
<line x1="619" y1="380.4" x2="630" y2="380.4" stroke="#33d633" stroke-width="1.1" />
<line x1="619" y1="383.8" x2="630" y2="383.8" stroke="#33d633" stroke-width="1.1" />
<line x1="619" y1="387.3" x2="630" y2="387.3" stroke="#33d633" stroke-width="1.1" />
<line x1="619" y1="391.2" x2="630" y2="391.2" stroke="#33d633" stroke-width="1.1" />
<line x1="619" y1="394.4" x2="630" y2="394.4" stroke="#33d633" stroke-width="1.1" />
<line x1="634" y1="376.8" x2="645" y2="376.8" stroke="#33d633" stroke-width="1.1" />
<line x1="645" y1="376.8" x2="663.5" y2="376.8" stroke="#b42323" stroke-width="1.3" />
<circle cx="654.7" cy="376.8" r="1.5" fill="#ff1414"/>
<rect x="623.9" y="412.0" width="16.800000000000068" height="24.0" rx="2" fill="#000" stroke="#33d633" stroke-width="1.1"/>
<text x="616" y="410.5" font-family="Liberation Sans" font-size="4" textLength="34" lengthAdjust="spacingAndGlyphs" fill="#2fc42f">bitwidth_multiplier</text>
<text x="616" y="439.0" font-family="Liberation Sans" font-size="4" textLength="34" lengthAdjust="spacingAndGlyphs" fill="#2fc42f">RGB_to_NS_conversio</text>
<line x1="585.9" y1="415.3" x2="609.3" y2="415.3" stroke="#ff1414" stroke-width="1.7" />
<circle cx="609.3" cy="415.3" r="1.5" fill="#ff1414"/>
<circle cx="585.9" cy="415.3" r="1.3" fill="#ff1414"/>
<line x1="609.3" y1="415.3" x2="620" y2="415.3" stroke="#b42323" stroke-width="1.1" />
<line x1="599.5" y1="418.9" x2="608.3" y2="418.9" stroke="#ff1414" stroke-width="1.7" />
<circle cx="608.3" cy="418.9" r="1.4" fill="#ff1414"/>
<line x1="608.3" y1="418.9" x2="620" y2="418.9" stroke="#b42323" stroke-width="1.1" />
<line x1="586.3" y1="422.3" x2="603" y2="422.3" stroke="#ff1414" stroke-width="1.6" />
<circle cx="603" cy="422.3" r="1.4" fill="#ff1414"/>
<line x1="603" y1="422.3" x2="620" y2="422.3" stroke="#a08020" stroke-width="1.1" />
<line x1="588.8" y1="425.8" x2="620" y2="425.8" stroke="#b42323" stroke-width="1.1" />
<line x1="595.6" y1="429.7" x2="606.9" y2="429.7" stroke="#ff1414" stroke-width="1.5" />
<circle cx="606.9" cy="429.7" r="1.4" fill="#ff1414"/>
<line x1="606.9" y1="429.7" x2="620" y2="429.7" stroke="#b42323" stroke-width="1.1" />
<line x1="591.7" y1="432.9" x2="620" y2="432.9" stroke="#b42323" stroke-width="1.1" />
<line x1="619" y1="415.3" x2="630" y2="415.3" stroke="#33d633" stroke-width="1.1" />
<line x1="619" y1="418.9" x2="630" y2="418.9" stroke="#33d633" stroke-width="1.1" />
<line x1="619" y1="422.3" x2="630" y2="422.3" stroke="#33d633" stroke-width="1.1" />
<line x1="619" y1="425.8" x2="630" y2="425.8" stroke="#33d633" stroke-width="1.1" />
<line x1="619" y1="429.7" x2="630" y2="429.7" stroke="#33d633" stroke-width="1.1" />
<line x1="619" y1="432.9" x2="630" y2="432.9" stroke="#33d633" stroke-width="1.1" />
<line x1="634" y1="415.3" x2="645" y2="415.3" stroke="#33d633" stroke-width="1.1" />
<line x1="645" y1="415.3" x2="663.5" y2="415.3" stroke="#b42323" stroke-width="1.3" />
<circle cx="654.7" cy="415.3" r="1.5" fill="#ff1414"/>
<rect x="623.9" y="450.2" width="16.800000000000068" height="24.0" rx="2" fill="#000" stroke="#33d633" stroke-width="1.1"/>
<text x="616" y="448.7" font-family="Liberation Sans" font-size="4" textLength="34" lengthAdjust="spacingAndGlyphs" fill="#2fc42f">Mrange_processor_eq</text>
<text x="616" y="477.2" font-family="Liberation Sans" font-size="4" textLength="34" lengthAdjust="spacingAndGlyphs" fill="#2fc42f">greater_equal_impgr</text>
<line x1="585.9" y1="453.5" x2="609.3" y2="453.5" stroke="#ff1414" stroke-width="1.7" />
<circle cx="609.3" cy="453.5" r="1.5" fill="#ff1414"/>
<circle cx="585.9" cy="453.5" r="1.3" fill="#ff1414"/>
<line x1="609.3" y1="453.5" x2="620" y2="453.5" stroke="#b42323" stroke-width="1.1" />
<line x1="599.5" y1="457.09999999999997" x2="608.3" y2="457.09999999999997" stroke="#ff1414" stroke-width="1.7" />
<circle cx="608.3" cy="457.09999999999997" r="1.4" fill="#ff1414"/>
<line x1="608.3" y1="457.09999999999997" x2="620" y2="457.09999999999997" stroke="#b42323" stroke-width="1.1" />
<line x1="586.3" y1="460.5" x2="603" y2="460.5" stroke="#ff1414" stroke-width="1.6" />
<circle cx="603" cy="460.5" r="1.4" fill="#ff1414"/>
<line x1="603" y1="460.5" x2="620" y2="460.5" stroke="#a08020" stroke-width="1.1" />
<line x1="588.8" y1="464.0" x2="620" y2="464.0" stroke="#b42323" stroke-width="1.1" />
<line x1="595.6" y1="467.9" x2="606.9" y2="467.9" stroke="#ff1414" stroke-width="1.5" />
<circle cx="606.9" cy="467.9" r="1.4" fill="#ff1414"/>
<line x1="606.9" y1="467.9" x2="620" y2="467.9" stroke="#b42323" stroke-width="1.1" />
<line x1="591.7" y1="471.09999999999997" x2="620" y2="471.09999999999997" stroke="#b42323" stroke-width="1.1" />
<line x1="619" y1="453.5" x2="630" y2="453.5" stroke="#33d633" stroke-width="1.1" />
<line x1="619" y1="457.09999999999997" x2="630" y2="457.09999999999997" stroke="#33d633" stroke-width="1.1" />
<line x1="619" y1="460.5" x2="630" y2="460.5" stroke="#33d633" stroke-width="1.1" />
<line x1="619" y1="464.0" x2="630" y2="464.0" stroke="#33d633" stroke-width="1.1" />
<line x1="619" y1="467.9" x2="630" y2="467.9" stroke="#33d633" stroke-width="1.1" />
<line x1="619" y1="471.09999999999997" x2="630" y2="471.09999999999997" stroke="#33d633" stroke-width="1.1" />
<line x1="634" y1="453.5" x2="645" y2="453.5" stroke="#33d633" stroke-width="1.1" />
<line x1="645" y1="453.5" x2="663.5" y2="453.5" stroke="#b42323" stroke-width="1.3" />
<circle cx="654.7" cy="453.5" r="1.5" fill="#ff1414"/>
<rect x="623.9" y="493.8" width="16.800000000000068" height="23.999999999999943" rx="2" fill="#000" stroke="#33d633" stroke-width="1.1"/>
<text x="616" y="492.3" font-family="Liberation Sans" font-size="4" textLength="34" lengthAdjust="spacingAndGlyphs" fill="#2fc42f">dual_comparatordual</text>
<text x="616" y="520.8" font-family="Liberation Sans" font-size="4" textLength="34" lengthAdjust="spacingAndGlyphs" fill="#2fc42f">NS_to_RGB_conversio</text>
<line x1="590" y1="497.1" x2="609.3" y2="497.1" stroke="#ff1414" stroke-width="1.7" />
<circle cx="609.3" cy="497.1" r="1.5" fill="#ff1414"/>
<circle cx="585.9" cy="497.1" r="1.3" fill="#ff1414"/>
<line x1="609.3" y1="497.1" x2="620" y2="497.1" stroke="#b42323" stroke-width="1.1" />
<line x1="599.5" y1="500.7" x2="608.3" y2="500.7" stroke="#ff1414" stroke-width="1.7" />
<circle cx="608.3" cy="500.7" r="1.4" fill="#ff1414"/>
<line x1="608.3" y1="500.7" x2="620" y2="500.7" stroke="#b42323" stroke-width="1.1" />
<line x1="586.3" y1="504.1" x2="603" y2="504.1" stroke="#ff1414" stroke-width="1.6" />
<circle cx="603" cy="504.1" r="1.4" fill="#ff1414"/>
<line x1="603" y1="504.1" x2="620" y2="504.1" stroke="#a08020" stroke-width="1.1" />
<line x1="588.8" y1="507.6" x2="620" y2="507.6" stroke="#b42323" stroke-width="1.1" />
<line x1="595.6" y1="511.5" x2="606.9" y2="511.5" stroke="#ff1414" stroke-width="1.5" />
<circle cx="606.9" cy="511.5" r="1.4" fill="#ff1414"/>
<line x1="606.9" y1="511.5" x2="620" y2="511.5" stroke="#b42323" stroke-width="1.1" />
<line x1="591.7" y1="514.7" x2="620" y2="514.7" stroke="#b42323" stroke-width="1.1" />
<line x1="619" y1="497.1" x2="630" y2="497.1" stroke="#33d633" stroke-width="1.1" />
<line x1="619" y1="500.7" x2="630" y2="500.7" stroke="#33d633" stroke-width="1.1" />
<line x1="619" y1="504.1" x2="630" y2="504.1" stroke="#33d633" stroke-width="1.1" />
<line x1="619" y1="507.6" x2="630" y2="507.6" stroke="#33d633" stroke-width="1.1" />
<line x1="619" y1="511.5" x2="630" y2="511.5" stroke="#33d633" stroke-width="1.1" />
<line x1="619" y1="514.7" x2="630" y2="514.7" stroke="#33d633" stroke-width="1.1" />
<line x1="634" y1="497.1" x2="645" y2="497.1" stroke="#33d633" stroke-width="1.1" />
<line x1="645" y1="497.1" x2="663.5" y2="497.1" stroke="#b42323" stroke-width="1.3" />
<circle cx="654.7" cy="497.1" r="1.5" fill="#ff1414"/>
<rect x="390.3" y="49.3" width="17.599999999999966" height="9.700000000000003" rx="1.5" fill="#000" stroke="#33d633" stroke-width="1.1"/>
<line x1="387.3" y1="52.2" x2="396" y2="52.2" stroke="#00ff00" stroke-width="2.6" />
<line x1="387.3" y1="55.4" x2="396" y2="55.4" stroke="#00ff00" stroke-width="2.6" />
<line x1="401.5" y1="52.2" x2="410.8" y2="52.2" stroke="#00ff00" stroke-width="2.6" />
<text x="378" y="48.0" font-family="Liberation Sans" font-size="4" textLength="41" lengthAdjust="spacingAndGlyphs" fill="#2fc42f">modular_add_submodular_</text>
<text x="388" y="62.8" font-family="Liberation Sans" font-size="4" textLength="21" lengthAdjust="spacingAndGlyphs" fill="#2fc42f">bitwidth_mul</text>
<rect x="446" y="49.5" width="16" height="6.5" rx="1.5" fill="#000" stroke="#33d633" stroke-width="1.1"/>
<line x1="441" y1="52.2" x2="450" y2="52.2" stroke="#00ff00" stroke-width="2.6" />
<line x1="456" y1="52.2" x2="465" y2="52.2" stroke="#00ff00" stroke-width="2.6" />
<text x="436" y="48.0" font-family="Liberation Sans" font-size="4" textLength="34" lengthAdjust="spacingAndGlyphs" fill="#2fc42f">RGB_to_NS_conversio</text>
<text x="451" y="60.0" font-family="Liberation Sans" font-size="4" textLength="5" lengthAdjust="spacingAndGlyphs" fill="#2fc42f">Mra</text>
<rect x="532" y="49.6" width="17.200000000000045" height="6.0" rx="1.5" fill="#000" stroke="#33d633" stroke-width="1.1"/>
<line x1="527" y1="52.2" x2="540" y2="52.2" stroke="#00ff00" stroke-width="2.6" />
<line x1="545" y1="52.2" x2="556" y2="52.2" stroke="#00ff00" stroke-width="2.6" />
<text x="521" y="48.0" font-family="Liberation Sans" font-size="4" textLength="40" lengthAdjust="spacingAndGlyphs" fill="#2fc42f">greater_equal_impgreat</text>
<text x="537" y="59.7" font-family="Liberation Sans" font-size="4" textLength="7" lengthAdjust="spacingAndGlyphs" fill="#2fc42f">dual</text>
<rect x="615.1" y="49.1" width="17.199999999999932" height="24.199999999999996" rx="1.5" fill="#000" stroke="#33d633" stroke-width="1.1"/>
<line x1="612" y1="52" x2="621" y2="52" stroke="#00ff00" stroke-width="2.6" />
<line x1="612" y1="55.8" x2="621" y2="55.8" stroke="#00ff00" stroke-width="2.6" />
<line x1="612" y1="59.6" x2="621" y2="59.6" stroke="#00ff00" stroke-width="2.6" />
<line x1="612" y1="62.6" x2="621" y2="62.6" stroke="#33d633" stroke-width="1.1" />
<line x1="612" y1="66.3" x2="621" y2="66.3" stroke="#33d633" stroke-width="1.1" />
<line x1="612" y1="69.5" x2="621" y2="69.5" stroke="#33d633" stroke-width="1.1" />
<line x1="632" y1="52" x2="638" y2="52" stroke="#00ff00" stroke-width="2.6" />
<line x1="627" y1="61" x2="637" y2="61" stroke="#00ff00" stroke-width="2.6" />
<text x="605" y="47.8" font-family="Liberation Sans" font-size="4" textLength="38" lengthAdjust="spacingAndGlyphs" fill="#2fc42f">NS_to_RGB_conversionN</text>
<text x="614" y="77.0" font-family="Liberation Sans" font-size="4" textLength="19" lengthAdjust="spacingAndGlyphs" fill="#2fc42f">modular_ad</text>
<rect x="440.9" y="108.3" width="16.900000000000034" height="17.10000000000001" rx="1.5" fill="#000" stroke="#33d633" stroke-width="1.1"/>
<line x1="437" y1="112" x2="447" y2="112" stroke="#00ff00" stroke-width="2.6" />
<line x1="437" y1="115.2" x2="447" y2="115.2" stroke="#00ff00" stroke-width="2.6" />
<line x1="437" y1="118.3" x2="447" y2="118.3" stroke="#00ff00" stroke-width="2.6" />
<line x1="437" y1="122" x2="447" y2="122" stroke="#33d633" stroke-width="1.1" />
<line x1="452" y1="112" x2="461" y2="112" stroke="#00ff00" stroke-width="2.6" />
<text x="434" y="106.5" font-family="Liberation Sans" font-size="4" textLength="31" lengthAdjust="spacingAndGlyphs" fill="#2fc42f">bitwidth_multipli</text>
<text x="442" y="129.2" font-family="Liberation Sans" font-size="4" textLength="14" lengthAdjust="spacingAndGlyphs" fill="#2fc42f">RGB_to_N</text>
<rect x="532" y="109" width="17" height="6" rx="1.5" fill="#000" stroke="#33d633" stroke-width="1.1"/>
<line x1="527" y1="112.3" x2="540" y2="112.3" stroke="#00ff00" stroke-width="2.6" />
<line x1="545" y1="112.3" x2="556" y2="112.3" stroke="#00ff00" stroke-width="2.6" />
<text x="521" y="107.0" font-family="Liberation Sans" font-size="4" textLength="40" lengthAdjust="spacingAndGlyphs" fill="#2fc42f">Mrange_processor_equal</text>
<text x="537" y="119.0" font-family="Liberation Sans" font-size="4" textLength="7" lengthAdjust="spacingAndGlyphs" fill="#2fc42f">grea</text>
<rect x="624" y="108" width="16.799999999999955" height="13.799999999999997" rx="0.5" fill="#000" stroke="#33d633" stroke-width="1.1"/>
<line x1="617" y1="111.7" x2="625.5" y2="111.7" stroke="#00ff00" stroke-width="2.6" />
<line x1="617" y1="118.5" x2="625.5" y2="118.5" stroke="#00ff00" stroke-width="2.6" />
<line x1="640.8" y1="111.5" x2="650" y2="111.5" stroke="#33d633" stroke-width="1" />
<text x="628" y="106.0" font-family="Liberation Sans" font-size="4" textLength="14" lengthAdjust="spacingAndGlyphs" fill="#2fc42f">dual_com</text>
<text x="605" y="126.0" font-family="Liberation Sans" font-size="4" textLength="53" lengthAdjust="spacingAndGlyphs" fill="#2fc42f">NS_to_RGB_conversionNS_to_RGB_</text>
<path d="M629.5,113 L633.5,115 L629.5,117 M630,117.5 H633" fill="none" stroke="#33d633" stroke-width="0.9"/>
<text x="632" y="120.5" font-family="Liberation Sans" font-size="4" textLength="6" lengthAdjust="spacingAndGlyphs" fill="#2fc42f">mod</text>
<path d="M456,152.2 H462 Q467,152.6 468,155.2 Q467,157.8 462,158.1 H456 Q458,155.2 456,152.2 Z" fill="none" stroke="#33d633" stroke-width="1"/>
<text x="458" y="150.8" font-family="Liberation Sans" font-size="4" textLength="8" lengthAdjust="spacingAndGlyphs" fill="#2fc42f">bitw</text>
<text x="430" y="163.0" font-family="Liberation Sans" font-size="4" textLength="65" lengthAdjust="spacingAndGlyphs" fill="#2fc42f">RGB_to_NS_conversionRGB_to_NS_convers</text>
<rect x="532" y="153" width="17" height="6" rx="1.5" fill="#000" stroke="#33d633" stroke-width="1.1"/>
<line x1="527" y1="156.3" x2="540" y2="156.3" stroke="#00ff00" stroke-width="2.6" />
<line x1="545" y1="156.3" x2="556" y2="156.3" stroke="#00ff00" stroke-width="2.6" />
<text x="521" y="151.0" font-family="Liberation Sans" font-size="4" textLength="40" lengthAdjust="spacingAndGlyphs" fill="#2fc42f">Mrange_processor_equal</text>
<text x="537" y="163.0" font-family="Liberation Sans" font-size="4" textLength="7" lengthAdjust="spacingAndGlyphs" fill="#2fc42f">grea</text>
<rect x="624" y="152" width="16.799999999999955" height="14.599999999999994" rx="0.5" fill="#000" stroke="#33d633" stroke-width="1.1"/>
<line x1="617" y1="155" x2="625.5" y2="155" stroke="#00ff00" stroke-width="2.6" />
<line x1="617" y1="162" x2="625.5" y2="162" stroke="#00ff00" stroke-width="2.6" />
<line x1="640.8" y1="155" x2="650" y2="155" stroke="#33d633" stroke-width="1" />
<text x="628" y="150.5" font-family="Liberation Sans" font-size="4" textLength="14" lengthAdjust="spacingAndGlyphs" fill="#2fc42f">dual_com</text>
<text x="605" y="170.0" font-family="Liberation Sans" font-size="4" textLength="53" lengthAdjust="spacingAndGlyphs" fill="#2fc42f">NS_to_RGB_conversionNS_to_RGB_</text>
<path d="M633.5,156.5 L629.5,158.5 L633.5,160.5" fill="none" stroke="#33d633" stroke-width="0.9"/>
<text x="632" y="164.0" font-family="Liberation Sans" font-size="4" textLength="6" lengthAdjust="spacingAndGlyphs" fill="#2fc42f">mod</text>
<path d="M619.3,187.3 L640.8,191.5 V202 L619.3,206.2 Z" fill="none" stroke="#33d633" stroke-width="1.1"/>
<line x1="614" y1="193.5" x2="624" y2="193.5" stroke="#00ff00" stroke-width="2.6" />
<line x1="614" y1="200" x2="624" y2="200" stroke="#00ff00" stroke-width="2.6" />
<line x1="638" y1="197" x2="648" y2="197" stroke="#00ff00" stroke-width="2.6" />
<text x="618" y="185.0" font-family="Liberation Sans" font-size="4" textLength="27" lengthAdjust="spacingAndGlyphs" fill="#2fc42f">bitwidth_multip</text>
<text x="605" y="210.0" font-family="Liberation Sans" font-size="4" textLength="50" lengthAdjust="spacingAndGlyphs" fill="#2fc42f">RGB_to_NS_conversionRGB_to_N</text>
<text x="522" y="492.5" font-family="Liberation Sans" font-size="4" textLength="40" lengthAdjust="spacingAndGlyphs" fill="#2fc42f">Mrange_processor_equal</text>
<rect x="534" y="494.4" width="17.200000000000045" height="6.800000000000011" rx="1.5" fill="#000" stroke="#33d633" stroke-width="1.1"/>
<line x1="530" y1="497.5" x2="541" y2="497.5" stroke="#00ff00" stroke-width="2.6" />
<line x1="545" y1="497.5" x2="556" y2="497.5" stroke="#00ff00" stroke-width="2.6" />
<text x="540" y="504.5" font-family="Liberation Sans" font-size="4" textLength="6" lengthAdjust="spacingAndGlyphs" fill="#2fc42f">gre</text>
<rect x="534" y="531.4" width="17" height="7.899999999999977" rx="1.5" fill="#000" stroke="#33d633" stroke-width="1.1"/>
<line x1="529" y1="535.5" x2="540" y2="535.5" stroke="#00ff00" stroke-width="2.6" />
<line x1="545" y1="535.5" x2="556" y2="535.5" stroke="#00ff00" stroke-width="2.6" />
<text x="522" y="531.0" font-family="Liberation Sans" font-size="4" textLength="40" lengthAdjust="spacingAndGlyphs" fill="#2fc42f">dual_comparatordual_co</text>
<text x="540" y="543.5" font-family="Liberation Sans" font-size="4" textLength="6" lengthAdjust="spacingAndGlyphs" fill="#2fc42f">NS_</text>
<line x1="556" y1="535.5" x2="585.9" y2="535.5" stroke="#ff1414" stroke-width="1.6" />
<path d="M545.4,553.2 H551.5 A3,2.85 0 0 1 551.5,558.9 H545.4 Z" fill="none" stroke="#33d633" stroke-width="1.1"/>
<path d="M516.2,553.9 H528.5 V557.7 H516.2 M528.5,555.8 H545" fill="none" stroke="#b42323" stroke-width="1.6" />
<path d="M557.7,556 H589" fill="none" stroke="#b42323" stroke-width="1.5" />
<text x="549" y="552.0" font-family="Liberation Sans" font-size="4" textLength="7" lengthAdjust="spacingAndGlyphs" fill="#2fc42f">modu</text>
<text x="518" y="563.0" font-family="Liberation Sans" font-size="4" textLength="67" lengthAdjust="spacingAndGlyphs" fill="#2fc42f">bitwidth_multiplier_dblbitwidth_multip</text>
<path d="M524,571.4 H531 A3,2.7 0 0 1 531,576.8 H524 Z" fill="none" stroke="#33d633" stroke-width="1.2"/>
<path d="M516,574 H524" fill="none" stroke="#ff1414" stroke-width="1.6" />
<circle cx="518" cy="575" r="1.4" fill="#ff1414"/>
<path d="M536.4,574 H595.4" fill="none" stroke="#ff1414" stroke-width="1.6" />
<text x="526" y="570.0" font-family="Liberation Sans" font-size="4" textLength="10" lengthAdjust="spacingAndGlyphs" fill="#2fc42f">RGB_t</text>
<path d="M537.5,589.2 Q545,589.2 553.2,592.1 Q545,595 537.5,595 Q540,592.1 537.5,589.2 Z" fill="none" stroke="#33d633" stroke-width="1.1"/>
<path d="M506,581.3 H595.4 M506,581.3 V591 H538" fill="none" stroke="#ff1414" stroke-width="1.6" />
<circle cx="521" cy="591" r="1.4" fill="#ff1414"/>
<path d="M553.2,592.1 H592.2" fill="none" stroke="#b42323" stroke-width="1.4" />
<text x="545" y="588.0" font-family="Liberation Sans" font-size="4" textLength="6" lengthAdjust="spacingAndGlyphs" fill="#2fc42f">Mra</text>
<text x="519" y="600.0" font-family="Liberation Sans" font-size="4" textLength="52" lengthAdjust="spacingAndGlyphs" fill="#2fc42f">greater_equal_impgreater_equa</text>
</svg>
<div id="chart" class="abs"></div>
<svg class="abs" style="left:0;top:0" width="1024" height="640" viewBox="0 0 1024 640">
<rect x="760" y="374.6" width="149.5" height="209.1" fill="#c0c0c0"/>
<g stroke="#2a2a2a" stroke-width="1.2">
<line x1="757" y1="404.4" x2="909.5" y2="404.4"/><line x1="757" y1="434.2" x2="909.5" y2="434.2"/>
<line x1="757" y1="463.5" x2="909.5" y2="463.5"/><line x1="757" y1="493.4" x2="909.5" y2="493.4"/>
<line x1="757" y1="523.4" x2="909.5" y2="523.4"/><line x1="757" y1="553.6" x2="909.5" y2="553.6"/>
<line x1="757" y1="374.8" x2="760" y2="374.8"/>
</g>
<line x1="760" y1="374.6" x2="760" y2="584" stroke="#808080" stroke-width="1.4"/>
<line x1="909.5" y1="374.6" x2="909.5" y2="584" stroke="#a0a0a0" stroke-width="1"/>
<line x1="760" y1="374.8" x2="909.5" y2="374.8" stroke="#999" stroke-width="1"/>
<line x1="757" y1="583.7" x2="910" y2="583.7" stroke="#2a2a2a" stroke-width="1.3"/>
<g stroke="#2a2a2a" stroke-width="1.1"><line x1="760" y1="583.7" x2="760" y2="588"/><line x1="834.9" y1="583.7" x2="834.9" y2="588"/><line x1="909.3" y1="583.7" x2="909.3" y2="588"/></g>
<g stroke="#222" stroke-width="0.9">
<rect x="772.4" y="396.2" width="16.8" height="187.5" fill="#9999ff"/>
<rect x="789.2" y="572.4" width="17.1" height="11.3" fill="#993366"/>
<rect x="847.4" y="409.3" width="16.8" height="174.4" fill="#9999ff"/>
<rect x="864.2" y="577.3" width="17.1" height="6.4" fill="#993366"/>
<rect x="881.3" y="581.3" width="16.2" height="2.4" fill="#ffffcc"/>
</g>
<rect x="916.5" y="433.2" width="85" height="90.7" fill="#fff" stroke="#555" stroke-width="1"/>
<g stroke="#333" stroke-width="0.8">
<rect x="920.1" y="439.8" width="5.4" height="6.5" fill="#9999ff"/>
<rect x="920.1" y="470.1" width="5.4" height="6.6" fill="#993366"/>
<rect x="920.1" y="499.7" width="5.4" height="6.8" fill="#ffffcc"/>
</g>
</svg>
<div class="ylab" style="left:722px;top:371.0px">3500</div>
<div class="ylab" style="left:722px;top:401.0px">3000</div>
<div class="ylab" style="left:722px;top:430.5px">2500</div>
<div class="ylab" style="left:722px;top:460.0px">2000</div>
<div class="ylab" style="left:722px;top:490.0px">1500</div>
<div class="ylab" style="left:722px;top:520.0px">1000</div>
<div class="ylab" style="left:722px;top:550.0px">500</div>
<div class="ylab" style="left:722px;top:580.0px">0</div>
<div class="ctxt" style="left:764.6px;top:595.5px;transform:scaleX(.827)">Existing design</div>
<div class="ctxt" style="left:837.3px;top:595.5px;transform:scaleX(.852)">Proposed design</div>
<div class="ctxt" style="left:928.8px;top:438px;transform:scaleX(.8)">Slices</div>
<div class="ctxt" style="left:928.8px;top:468px;transform:scaleX(.904)">Maximum</div>
<div class="ctxt" style="left:928.8px;top:481px;transform:scaleX(.885)">frequency (Mhz)</div>
<div class="ctxt" style="left:928.8px;top:498.5px;transform:scaleX(.857)">Delay (ns)</div>
<svg class="abs" style="left:0;top:0" width="1024" height="640"><rect x="0.5" y="2" width="7.5" height="9.5" rx="1" fill="#e8f0fb" stroke="#3f73c9" stroke-width="1.1"/>
<path d="M0.5,4.5 H6 L4,8 H2.5 Z" fill="#f2c21c"/>
<line x1="102.5" y1="15" x2="102.5" y2="31" stroke="#c4c4c4" stroke-width="1"/>
<line x1="103.5" y1="15" x2="103.5" y2="31" stroke="#ffffff" stroke-width="1"/>
<line x1="269.5" y1="15" x2="269.5" y2="31" stroke="#c4c4c4" stroke-width="1"/>
<line x1="270.5" y1="15" x2="270.5" y2="31" stroke="#ffffff" stroke-width="1"/>
<line x1="413" y1="15" x2="413" y2="31" stroke="#c4c4c4" stroke-width="1"/>
<line x1="414" y1="15" x2="414" y2="31" stroke="#ffffff" stroke-width="1"/>
<line x1="496" y1="15" x2="496" y2="31" stroke="#c4c4c4" stroke-width="1"/>
<line x1="497" y1="15" x2="497" y2="31" stroke="#ffffff" stroke-width="1"/>
<line x1="1" y1="17" x2="1" y2="30" stroke="#9a9a9a" stroke-width="1" stroke-dasharray="1 1.6"/>
<line x1="106.6" y1="17" x2="106.6" y2="30" stroke="#9a9a9a" stroke-width="1" stroke-dasharray="1 1.6"/>
<line x1="273.8" y1="17" x2="273.8" y2="30" stroke="#9a9a9a" stroke-width="1" stroke-dasharray="1 1.6"/>
<line x1="417.5" y1="17" x2="417.5" y2="30" stroke="#9a9a9a" stroke-width="1" stroke-dasharray="1 1.6"/>
<line x1="501" y1="17" x2="501" y2="30" stroke="#9a9a9a" stroke-width="1" stroke-dasharray="1 1.6"/>
<line x1="79.7" y1="17.5" x2="79.7" y2="29.5" stroke="#8a8a8a" stroke-width="1"/>
<line x1="80.7" y1="17.5" x2="80.7" y2="29.5" stroke="#ffffff" stroke-width="1"/>
<line x1="186.5" y1="17.5" x2="186.5" y2="29.5" stroke="#8a8a8a" stroke-width="1"/>
<line x1="187.5" y1="17.5" x2="187.5" y2="29.5" stroke="#ffffff" stroke-width="1"/>
<line x1="228.7" y1="17.5" x2="228.7" y2="29.5" stroke="#8a8a8a" stroke-width="1"/>
<line x1="229.7" y1="17.5" x2="229.7" y2="29.5" stroke="#ffffff" stroke-width="1"/>
<line x1="390.7" y1="17.5" x2="390.7" y2="29.5" stroke="#8a8a8a" stroke-width="1"/>
<line x1="391.7" y1="17.5" x2="391.7" y2="29.5" stroke="#ffffff" stroke-width="1"/>
<defs><linearGradient id="gdoc" x1="0" y1="0" x2="1" y2="1"><stop offset="0" stop-color="#ffffff"/><stop offset="1" stop-color="#bcd4f4"/></linearGradient></defs>
<path d="M7.6,18.6 H15.5 L18.4,21.5 V28.4 H7.6 Z" fill="url(#gdoc)" stroke="#4a7ad0" stroke-width="1.1"/>
<path d="M15,18.6 L18.4,22 H15 Z" fill="#3b66c4"/>
<path d="M25.2,21.5 H29 L30,22.5 H34 V28.6 H25.2 Z" fill="#e9c22a" stroke="#c9a20f" stroke-width="0.8"/>
<path d="M26,28.6 L28,24.5 H37 L34.5,28.6 Z" fill="#f6dc50"/>
<path d="M30.5,20.6 Q33.5,18.2 35.5,21.2 L37.3,20.6 L35.3,24.6 L32.4,21.8 L34,21.6 Q32.8,20.2 30.5,20.6 Z" fill="#1fa01f"/>
<rect x="44" y="18.6" width="12" height="10" rx="0.8" fill="#8f8f8f"/>
<rect x="45.5" y="19.6" width="9" height="4.2" fill="#e6e6e6"/>
<rect x="47" y="24.8" width="6" height="3.0" fill="#dcdcdc"/>
<rect x="66" y="18.2" width="8.5" height="7.5" rx="0.8" fill="#8f8f8f"/>
<rect x="67.5" y="19.2" width="5.5" height="3.15" fill="#e6e6e6"/>
<rect x="69" y="22.85" width="2.5" height="2.25" fill="#dcdcdc"/>
<rect x="64" y="19.6" width="8.5" height="8" rx="0.8" fill="#8f8f8f"/>
<rect x="65.5" y="20.6" width="5.5" height="3.36" fill="#e6e6e6"/>
<rect x="67" y="24.560000000000002" width="2.5" height="2.4" fill="#dcdcdc"/>
<rect x="62.3" y="21.2" width="9" height="7.4" rx="0.8" fill="#8f8f8f"/>
<rect x="63.8" y="22.2" width="6" height="3.108" fill="#e6e6e6"/>
<rect x="65.3" y="25.788" width="3" height="2.22" fill="#dcdcdc"/>
<rect x="87.5" y="18.5" width="7" height="5" fill="#9cc3ef" stroke="#7aa0cc" stroke-width="0.6"/>
<path d="M85,23 H98 V27.5 H85 Z" fill="#d3d3d3" stroke="#a9a9a9" stroke-width="0.8"/>
<rect x="87" y="27" width="9" height="1.5" fill="#b8b8b8"/>
<g stroke="#8c8c8c" stroke-width="1.3" fill="none"><circle cx="116.5" cy="26.6" r="1.9"/><circle cx="122.6" cy="26.6" r="1.9"/><path d="M117.5,24.8 L122.5,18.3 M121.6,24.8 L116.6,18.3"/></g>
<rect x="132.8" y="19" width="6.5" height="7.5" rx="0.5" fill="#e9e9e9" stroke="#9a9a9a" stroke-width="1"/>
<rect x="136.3" y="21.5" width="7" height="7" rx="0.5" fill="#e9e9e9" stroke="#9a9a9a" stroke-width="1"/>
<rect x="151.8" y="19" width="7" height="8.5" rx="0.5" fill="#e9e9e9" stroke="#a5a5a5" stroke-width="1"/>
<rect x="154.8" y="21.5" width="6.5" height="7" rx="0.5" fill="#e9e9e9" stroke="#9a9a9a" stroke-width="1"/>
<path d="M169.8,19.3 L180,28.5 M180,19.3 L169.8,28.5" stroke="#8a8a8a" stroke-width="2.1"/>
<path d="M194,21.8 H199 A3.2,3.2 0 0 1 199,28 H196" fill="none" stroke="#8c8c8c" stroke-width="1.8"/>
<path d="M192.6,21.8 L195.8,18.8 V24.8 Z" fill="#8c8c8c"/>
<path d="M220,21.8 H215 A3.2,3.2 0 0 0 215,28 H218" fill="none" stroke="#8c8c8c" stroke-width="1.8"/>
<path d="M221.6,21.8 L218.4,18.8 V24.8 Z" fill="#8c8c8c"/>
<g fill="#1e1e1e"><path d="M234,27.5 L236,19 H239.2 V28.2 H234 Z"/><path d="M246.6,27.5 L244.6,19 H241.4 V28.2 H246.6 Z"/><rect x="238.8" y="21.5" width="3" height="3"/></g>
<g fill="#e8e8e8"><circle cx="236.5" cy="26.2" r="1.1"/><circle cx="244.1" cy="26.2" r="1.1"/></g>
<path d="M252.8,19.5 H258 L259,20.5 H264.8 V28.5 H252.8 Z" fill="#e9e9e9" stroke="#b0b0b0" stroke-width="0.8"/>
<g fill="#8e8e8e"><path d="M254,28 L255.5,22 H258 V28.3 H254 Z"/><path d="M264,28 L262.5,22 H260 V28.3 H264 Z"/><rect x="257.6" y="23.5" width="2.8" height="2.4"/></g>
<path d="M281.6,28 L286.40000000000003,23.2" stroke="#d8801e" stroke-width="2.6" stroke-linecap="round"/>
<circle cx="289.40000000000003" cy="21.6" r="4.1" fill="#dce6fb" stroke="#9aaaf0" stroke-width="1.3"/>
<path d="M287.20000000000005,21.6 H291.6 M289.40000000000003,19.4 V23.8" stroke="#2b50c8" stroke-width="1.6"/>
<path d="M299.9,28 L304.7,23.2" stroke="#d8801e" stroke-width="2.6" stroke-linecap="round"/>
<circle cx="307.7" cy="21.6" r="4.1" fill="#dce6fb" stroke="#9aaaf0" stroke-width="1.3"/>
<path d="M305.5,21.6 H309.9" stroke="#2b50c8" stroke-width="1.6"/>
<circle cx="318.8" cy="27.4" r="1.6" fill="#d8801e"/>
<circle cx="324.4" cy="22.8" r="5.6" fill="#c9d4fa"/>
<circle cx="324.4" cy="22.8" r="4.6" fill="#f2f6ff" stroke="#2246c8" stroke-width="2.1" stroke-dasharray="5.2 2" stroke-dashoffset="6.2"/>
<rect x="323.09999999999997" y="21.5" width="2.6" height="2.6" fill="none" stroke="#2246c8" stroke-width="0.9"/>
<circle cx="337.1" cy="27.4" r="1.6" fill="#d8801e"/>
<circle cx="342.7" cy="22.8" r="5.6" fill="#c9d4fa"/>
<circle cx="342.7" cy="22.8" r="4.6" fill="#f2f6ff" stroke="#2246c8" stroke-width="2.1" stroke-dasharray="5.2 2" stroke-dashoffset="6.2"/>
<rect x="341.4" y="21.5" width="2.6" height="2.6" fill="none" stroke="#2246c8" stroke-width="0.9"/>
<path d="M355,28 L359.5,23.8" stroke="#a6a6a6" stroke-width="2.3" stroke-linecap="round"/><circle cx="362" cy="21.6" r="3.8" fill="#c8c8c8" stroke="#a0a0a0" stroke-width="1"/>
<path d="M373.8,18.8 H381.5 L384.2,21.5 V28.6 H373.8 Z" fill="#f4f8ff" stroke="#4a7ad0" stroke-width="1.1"/>
<path d="M381.2,18.8 L384.2,21.8 H381.2 Z" fill="#3b66c4"/>
<path d="M375.6,23 Q378.5,20.5 382.2,22.5 M376,25.6 Q379.5,27.8 382.4,25.2" stroke="#16a016" stroke-width="1.8" fill="none"/>
<rect x="393.6" y="17.3" width="17.6" height="12.2" rx="2" fill="#dedede" stroke="#707070" stroke-width="1.3"/>
<path d="M397,27.5 L405,23" stroke="#d9a40c" stroke-width="2.1" stroke-linecap="round"/>
<path d="M402,19.6 Q406,19 409,25.5 L407.6,26.5 Q405,22.5 401.5,21.5 Z" fill="#a7a2e8"/>
<rect x="423.6" y="18.8" width="7" height="5.5" fill="#eaf3ff" stroke="#3f80d8" stroke-width="1"/>
<rect x="423.6" y="18.8" width="7" height="1.8" fill="#3f80d8"/>
<rect x="426.5" y="21.2" width="7" height="5.5" fill="#eaf3ff" stroke="#3f80d8" stroke-width="1"/>
<rect x="426.5" y="21.2" width="7" height="1.8" fill="#3f80d8"/>
<rect x="429.5" y="23.5" width="7" height="5.3" fill="#eaf3ff" stroke="#3f80d8" stroke-width="1"/>
<rect x="429.5" y="23.5" width="7" height="1.8" fill="#3f80d8"/>
<rect x="444" y="19" width="9.2" height="9.6" fill="#eaf3ff" stroke="#3f80d8" stroke-width="1"/><path d="M444,19.9 H453.2 M444,23.8 H453.2 M444,24.8 H453.2" stroke="#3f80d8" stroke-width="1.3"/>
<rect x="462.3" y="19" width="9.2" height="9.6" fill="#eaf3ff" stroke="#3f80d8" stroke-width="1"/><path d="M462.3,19.8 H471.5 M466.9,19 V28.6" stroke="#2f64c0" stroke-width="1.5"/>
<rect x="480" y="19.5" width="8" height="6" fill="#eaf3ff" stroke="#3f80d8" stroke-width="1"/>
<rect x="480" y="19.5" width="8" height="1.8" fill="#3f80d8"/>
<rect x="483.3" y="22.5" width="8" height="6" fill="#eaf3ff" stroke="#3f80d8" stroke-width="1"/>
<rect x="483.3" y="22.5" width="8" height="1.8" fill="#3f80d8"/>
<path d="M508.3,28.2 L514.8,21.8" stroke="#6c68c8" stroke-width="2.7" stroke-linecap="round"/>
<circle cx="516.8" cy="20.6" r="2.6" fill="none" stroke="#6c68c8" stroke-width="2.2" stroke-dasharray="12 4.3" stroke-dashoffset="-1"/>
<path d="M526.2,18.6 V28 L528.6,25.8 L530.4,29.2 L532,28.4 L530.3,25.2 H533.4 Z" fill="#1c1c1c"/>
<text x="531" y="28.3" font-family="Liberation Sans" font-weight="bold" font-size="12" fill="#2458c8">?</text>
<rect x="975.3" y="1" width="15.900000000000091" height="10.5" rx="1" fill="#e2ecf6" stroke="#a3b4c8" stroke-width="1"/>
<rect x="994.2" y="1" width="13.399999999999977" height="10.5" rx="1" fill="#e2ecf6" stroke="#a3b4c8" stroke-width="1"/>
<rect x="1009" y="1" width="13.399999999999977" height="10.5" rx="1" fill="#e2ecf6" stroke="#a3b4c8" stroke-width="1"/>
<rect x="981" y="7.2" width="5" height="1.6" fill="#4a5462"/>
<g fill="none" stroke="#4a5462" stroke-width="1.1"><rect x="998.2" y="5.2" width="4.6" height="3.6"/><path d="M999.8,5.2 V3.3 H1004.5 V6.8 H1002.8"/></g>
<path d="M1013.5,3.5 L1018,8.3 M1018,3.5 L1013.5,8.3" stroke="#4a5462" stroke-width="1.6"/><line x1="1" y1="64.3" x2="15" y2="64.3" stroke="#c6c6c6" stroke-width="1"/>
<line x1="1" y1="83.3" x2="15" y2="83.3" stroke="#c6c6c6" stroke-width="1"/>
<line x1="1" y1="116.3" x2="15" y2="116.3" stroke="#c6c6c6" stroke-width="1"/>
<line x1="1" y1="179.4" x2="15" y2="179.4" stroke="#c6c6c6" stroke-width="1"/>
<line x1="1" y1="213.5" x2="15" y2="213.5" stroke="#c6c6c6" stroke-width="1"/>
<line x1="1" y1="276.3" x2="15" y2="276.3" stroke="#c6c6c6" stroke-width="1"/>
<rect x="0.8" y="35.3" width="12" height="10" fill="none" stroke="#e23c3c" stroke-width="1" stroke-dasharray="2 1"/>
<path d="M4,36 V45 L6,43 L7.6,46 L9,45.3 L7.6,42.5 H10.4 Z" fill="#202020"/>
<rect x="0.3" y="49.2" width="15" height="12.6" rx="2" fill="#dcdcdc" stroke="#787878" stroke-width="1.1"/>
<path d="M2.5,52 L12.5,59 M12.5,52 L2.5,59" stroke="#2a5ad0" stroke-width="1.3"/>
<g fill="#2a5ad0"><rect x="1.5" y="51" width="2.4" height="2.4"/><rect x="11.5" y="51" width="2.4" height="2.4"/><rect x="1.5" y="57.8" width="2.4" height="2.4"/></g>
<rect x="8.4" y="56.2" width="5.6" height="4.4" fill="#fff" stroke="#e03030" stroke-width="1"/>
<g fill="#f0a030"><path d="M5,69.5 L6,72 L8.5,72.2 L6.6,73.8 L7.2,76.3 L5,75 L2.8,76.3 L3.4,73.8 L1.5,72.2 L4,72 Z"/><path d="M9.5,72 L10.4,74 L12.5,74.2 L10.9,75.5 L11.4,77.6 L9.5,76.5 L7.6,77.6 L8.1,75.5 L6.5,74.2 L8.6,74 Z"/><path d="M3.5,75 L4.2,76.5 L5.8,76.7 L4.6,77.7 L5,79 L3.5,78.3 L2,79 L2.4,77.7 L1.2,76.7 L2.8,76.5 Z"/></g>
<path d="M3,89.5 V96.5 L11.5,93 Z M1,93 H3" fill="none" stroke="#a8a8a8" stroke-width="1"/>
<rect x="1.5" y="90.5" width="3" height="5" rx="1.5" fill="none" stroke="#a8a8a8" stroke-width="1"/>
<path d="M11,104.3 V111.5 L2.5,108 Z" fill="none" stroke="#a8a8a8" stroke-width="1"/><rect x="8.5" y="105.5" width="3" height="5" rx="1.5" fill="none" stroke="#a8a8a8" stroke-width="1"/>
<rect x="3.5" y="124.5" width="8.5" height="6" fill="#f4f4f4" stroke="#a8a8a8" stroke-width="1"/><rect x="1" y="123" width="3" height="3" fill="none" stroke="#a8a8a8" stroke-width="1"/>
<rect x="0.5" y="136.2" width="5" height="5.5" fill="#fff" stroke="#909090" stroke-width="1"/><rect x="7" y="141" width="5.5" height="6" fill="#ddd" stroke="#a8a8a8" stroke-width="1"/><path d="M7.5,141.5 L12,146.5 M12,141.5 L7.5,146.5" stroke="#a8a8a8" stroke-width="0.8"/>
<rect x="3" y="152.5" width="8" height="7" rx="1" fill="#e8e8e8" stroke="#c2c2c2" stroke-width="1"/><circle cx="7" cy="156" r="1.8" fill="none" stroke="#b5b5b5"/>
<rect x="3" y="167" width="8" height="7" rx="1" fill="#e8e8e8" stroke="#c2c2c2" stroke-width="1"/><path d="M5,170.5 H9" stroke="#b5b5b5"/>
<rect x="2.5" y="185.3" width="8" height="7.5" fill="#eee" stroke="#b3b3b3" stroke-width="1"/><path d="M5,187 V191 L8.5,189 Z" fill="none" stroke="#b3b3b3" stroke-width="0.9"/>
<rect x="0.5" y="199.5" width="3" height="8.5" fill="#9cc8f0" stroke="#3a78d0" stroke-width="0.8"/><text x="4.3" y="206" font-family="Liberation Sans" font-weight="bold" font-size="8" fill="#2c5cc0">A</text><line x1="4.3" y1="207" x2="12" y2="207" stroke="#2c5cc0" stroke-width="0.8"/>
<path d="M6,219.5 L10.5,223.5 H8 V226 H4 V223.5 H1.5 Z" fill="#8a8a8a"/><path d="M1.5,227.5 L6,224.5 L10.5,227.5" fill="none" stroke="#bbb" stroke-width="0.8"/>
<circle cx="6.5" cy="237.8" r="5.3" fill="#3cbf2e" stroke="#2a9a20" stroke-width="0.6"/><path d="M9.5,237.8 H4 M6.2,235.3 L3.6,237.8 L6.2,240.3" stroke="#fff" stroke-width="1.4" fill="none"/>
<circle cx="6.5" cy="252.8" r="5.2" fill="#c9c9c9" stroke="#b0b0b0" stroke-width="0.6"/><path d="M3.5,252.8 H9 M6.8,250.3 L9.4,252.8 L6.8,255.3" stroke="#f2f2f2" stroke-width="1.4" fill="none"/>
<circle cx="7" cy="266.8" r="4.3" fill="#e2e2e2" stroke="#bdbdbd" stroke-width="1"/><path d="M0.5,267 H4 M5.5,269 L8.5,265" stroke="#b0b0b0" stroke-width="1"/>
<rect x="1.5" y="280.8" width="4" height="6" fill="#fff" stroke="#c0c0c0" stroke-width="1"/><rect x="7.5" y="284" width="4.5" height="6.5" fill="#fff" stroke="#bdbdbd" stroke-width="1"/>
<path d="M2.5,295.5 H12 V303 H8.5 L7,305 L5.5,303 H2.5 Z" fill="#34b82a" stroke="#2a8f20" stroke-width="0.6"/><path d="M5.5,297 V302 L9.5,299.5 Z" fill="#111"/></svg>
<div class="menu" style="left:15px"><u>F</u>ile</div>
<div class="menu" style="left:42.4px"><u>E</u>dit</div>
<div class="menu" style="left:71.3px"><u>V</u>iew</div>
<div class="menu" style="left:104px"><u>W</u>indow</div>
<div class="menu" style="left:151.7px">La<u>y</u>out</div>
<div class="menu" style="left:194.3px"><u>H</u>elp</div>
</body></html>
